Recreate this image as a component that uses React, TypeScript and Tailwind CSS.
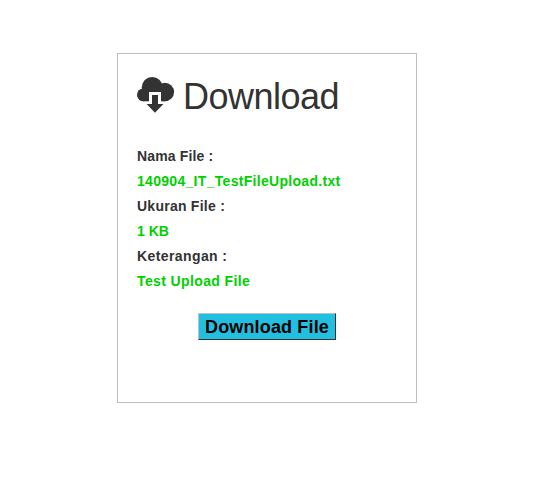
export default function App() {
  return (
    <main className="h-[496px] w-[540px] bg-white pt-[53px] pl-[117px] font-['Liberation_Sans',Arial,sans-serif] text-[#333]">
      <section className="h-[350px] w-[300px] border border-[#bfbfbf] px-[19px] pt-[22px]">
        <h1 className="flex h-[42px] items-start gap-2 text-[36px] leading-[42px] tracking-[-0.5px]">
          <svg width="38" height="36" viewBox="0 0 38 36" className="mt-px shrink-0" fill="#333">
            <circle cx="15.2" cy="10.5" r="10.5" />
            <circle cx="27.8" cy="15" r="9.3" />
            <circle cx="6.4" cy="17.9" r="6.4" />
            <path d="M6 12H28V24.3H6Z" />
            <path d="M12 15H24V25H12Z" fill="#fff" />
            <path d="M15 18H21V27H26.4L18 35.8L9.6 27H15Z" />
          </svg>
          <span>Download</span>
        </h1>
        <dl className="mt-[26px] text-[14px] leading-[25px] font-bold">
          <dt className="tracking-[0.15px]">Nama File :</dt>
          <dd className="tracking-[0.3px] text-[#00d000]">140904_IT_TestFileUpload.txt</dd>
          <dt className="tracking-[0.25px]">Ukuran File :</dt>
          <dd className="text-[#00d000]">1 KB</dd>
          <dt className="tracking-[0.4px]">Keterangan :</dt>
          <dd className="tracking-[0.38px] text-[#00d000]">Test Upload File</dd>
        </dl>
        <button className="mt-[19px] ml-[61px] h-[27px] w-[138px] border border-t-[#c0c0c0] border-r-[#333] border-b-[#333] border-l-[#c0c0c0] bg-[#22bfe0] text-[18px] leading-none font-bold tracking-[0.15px] whitespace-nowrap text-black">Download File</button>
      </section>
    </main>
  );
}
